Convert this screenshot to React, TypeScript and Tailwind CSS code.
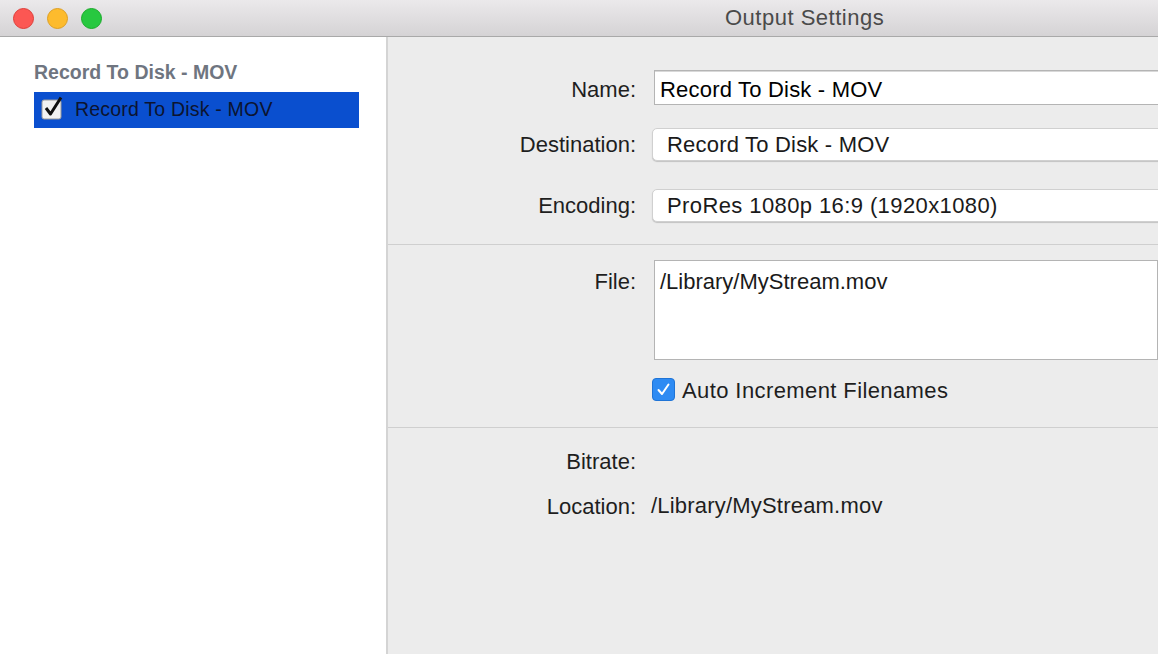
import React from 'react';

const font = { fontFamily: '"Liberation Sans", Arial, sans-serif' };

const Row: React.FC<{ label: string; className?: string; labelClass?: string; children?: React.ReactNode }> = ({
  label,
  className,
  labelClass,
  children,
}) => (
  <div className={`flex items-center ${className ?? ''}`}>
    <div className={`w-[248px] shrink-0 text-right text-[22px] text-[#1e1e1e] leading-none ${labelClass ?? ''}`}>{label}</div>
    <div className="ml-[16px] flex-1 min-w-0">{children}</div>
  </div>
);

export default function App() {
  return (
    <div className="w-[1158px] h-[654px] overflow-hidden flex flex-col bg-[#ececec]" style={font}>
      {/* title bar */}
      <div className="h-[37px] shrink-0 flex items-center bg-gradient-to-b from-[#ebe9eb] to-[#d5d3d5] border-b border-[#a9a9a9]">
        <div className="flex items-center gap-[13px] pl-[13px]">
          <span className="w-[21px] h-[21px] rounded-full bg-[#fc5753] border border-[#df3d38]" />
          <span className="w-[21px] h-[21px] rounded-full bg-[#fdbb2d] border border-[#de9f22]" />
          <span className="w-[21px] h-[21px] rounded-full bg-[#27c840] border border-[#1aab2a]" />
        </div>
        <div className="ml-[623px] text-[22px] tracking-[0.5px] text-[#4a4a4a] leading-none">Output Settings</div>
      </div>

      <div className="flex flex-1 min-h-0">
        {/* sidebar */}
        <div className="w-[388px] shrink-0 bg-white border-r-2 border-[#d4d4d4] pt-[26px] pl-[34px]">
          <div className="text-[19.5px] font-bold text-[#6f7580] leading-none">Record To Disk - MOV</div>
          <div className="mt-[9px] w-[325px] h-[36px] bg-[#0a4fcf] flex items-center pl-[7px]">
            <svg width="24" height="24" viewBox="0 0 24 24" className="shrink-0 -mt-[4px]">
              <rect x="1" y="4" width="19" height="19" rx="2" fill="#f2f2f2" stroke="#9a9a9a" strokeWidth="1" />
              <path d="M5 12 L9.5 18 L20 1.5" fill="none" stroke="#111" strokeWidth="3" strokeLinejoin="round" />
            </svg>
            <span className="ml-[10px] text-[19.5px] tracking-[0.2px] text-[#0c1430] leading-none">Record To Disk - MOV</span>
          </div>
        </div>

        {/* settings */}
        <div className="flex-1 min-w-0 overflow-hidden flex flex-col">
          <div className="pt-[33px] pb-[22px] border-b border-[#cfcfcf]">
            <Row label="Name:" labelClass="translate-y-[2px]">
              <div className="ml-[2px] h-[35px] w-[600px] bg-white border border-[#b4b4b4] shadow-[inset_0_1px_0_#d8d8d8] flex items-center pl-[5px] text-[22px] tracking-[0.2px] text-black leading-none">
                <span className="translate-y-[2px]">Record To Disk - MOV</span>
              </div>
            </Row>
            <Row label="Destination:" className="mt-[23px]">
              <div className="h-[33px] w-[600px] bg-white rounded-[5px] border border-[#d0d0d0] shadow-[0_1px_1px_rgba(0,0,0,0.18)] flex items-center pl-[14px] text-[22px] tracking-[0.2px] text-[#1a1a1a] leading-none">
                Record To Disk - MOV
              </div>
            </Row>
            <Row label="Encoding:" className="mt-[28px]">
              <div className="h-[33px] w-[600px] bg-white rounded-[5px] border border-[#d0d0d0] shadow-[0_1px_1px_rgba(0,0,0,0.18)] flex items-center pl-[14px] text-[22px] tracking-[0.4px] text-[#1a1a1a] leading-none">
                ProRes 1080p 16:9 (1920x1080)
              </div>
            </Row>
          </div>

          <div className="pt-[15px] pb-[26px] border-b border-[#cfcfcf]">
            <div className="flex items-start">
              <div className="w-[248px] shrink-0 text-right text-[22px] text-[#1e1e1e] leading-none pt-[11px]">File:</div>
              <div className="ml-[18px] h-[100px] w-[600px] bg-white border border-[#b4b4b4] pl-[5px] pt-[10px] text-[22px] text-[#1a1a1a] leading-none">
                /Library/MyStream.mov
              </div>
            </div>
            <div className="flex items-center mt-[18px] ml-[264px]">
              <span className="w-[23px] h-[23px] rounded-[4px] bg-[#2e8bf3] border border-[#1f74d6] flex items-center justify-center">
                <svg width="15" height="15" viewBox="0 0 15 15">
                  <path d="M2.5 8 L6 12 L12.5 2.5" fill="none" stroke="white" strokeWidth="2" strokeLinecap="round" strokeLinejoin="round" />
                </svg>
              </span>
              <span className="ml-[7px] text-[22px] tracking-[0.4px] text-[#1e1e1e] leading-none translate-y-[1px]">Auto Increment Filenames</span>
            </div>
          </div>

          <div className="pt-[23px]">
            <Row label="Bitrate:" className="h-[22px]" />
            <Row label="Location:" className="mt-[23px] h-[22px]">
              <span className="-ml-[1px] text-[22px] tracking-[0.2px] text-[#1e1e1e] leading-none">/Library/MyStream.mov</span>
            </Row>
          </div>
        </div>
      </div>
    </div>
  );
}
